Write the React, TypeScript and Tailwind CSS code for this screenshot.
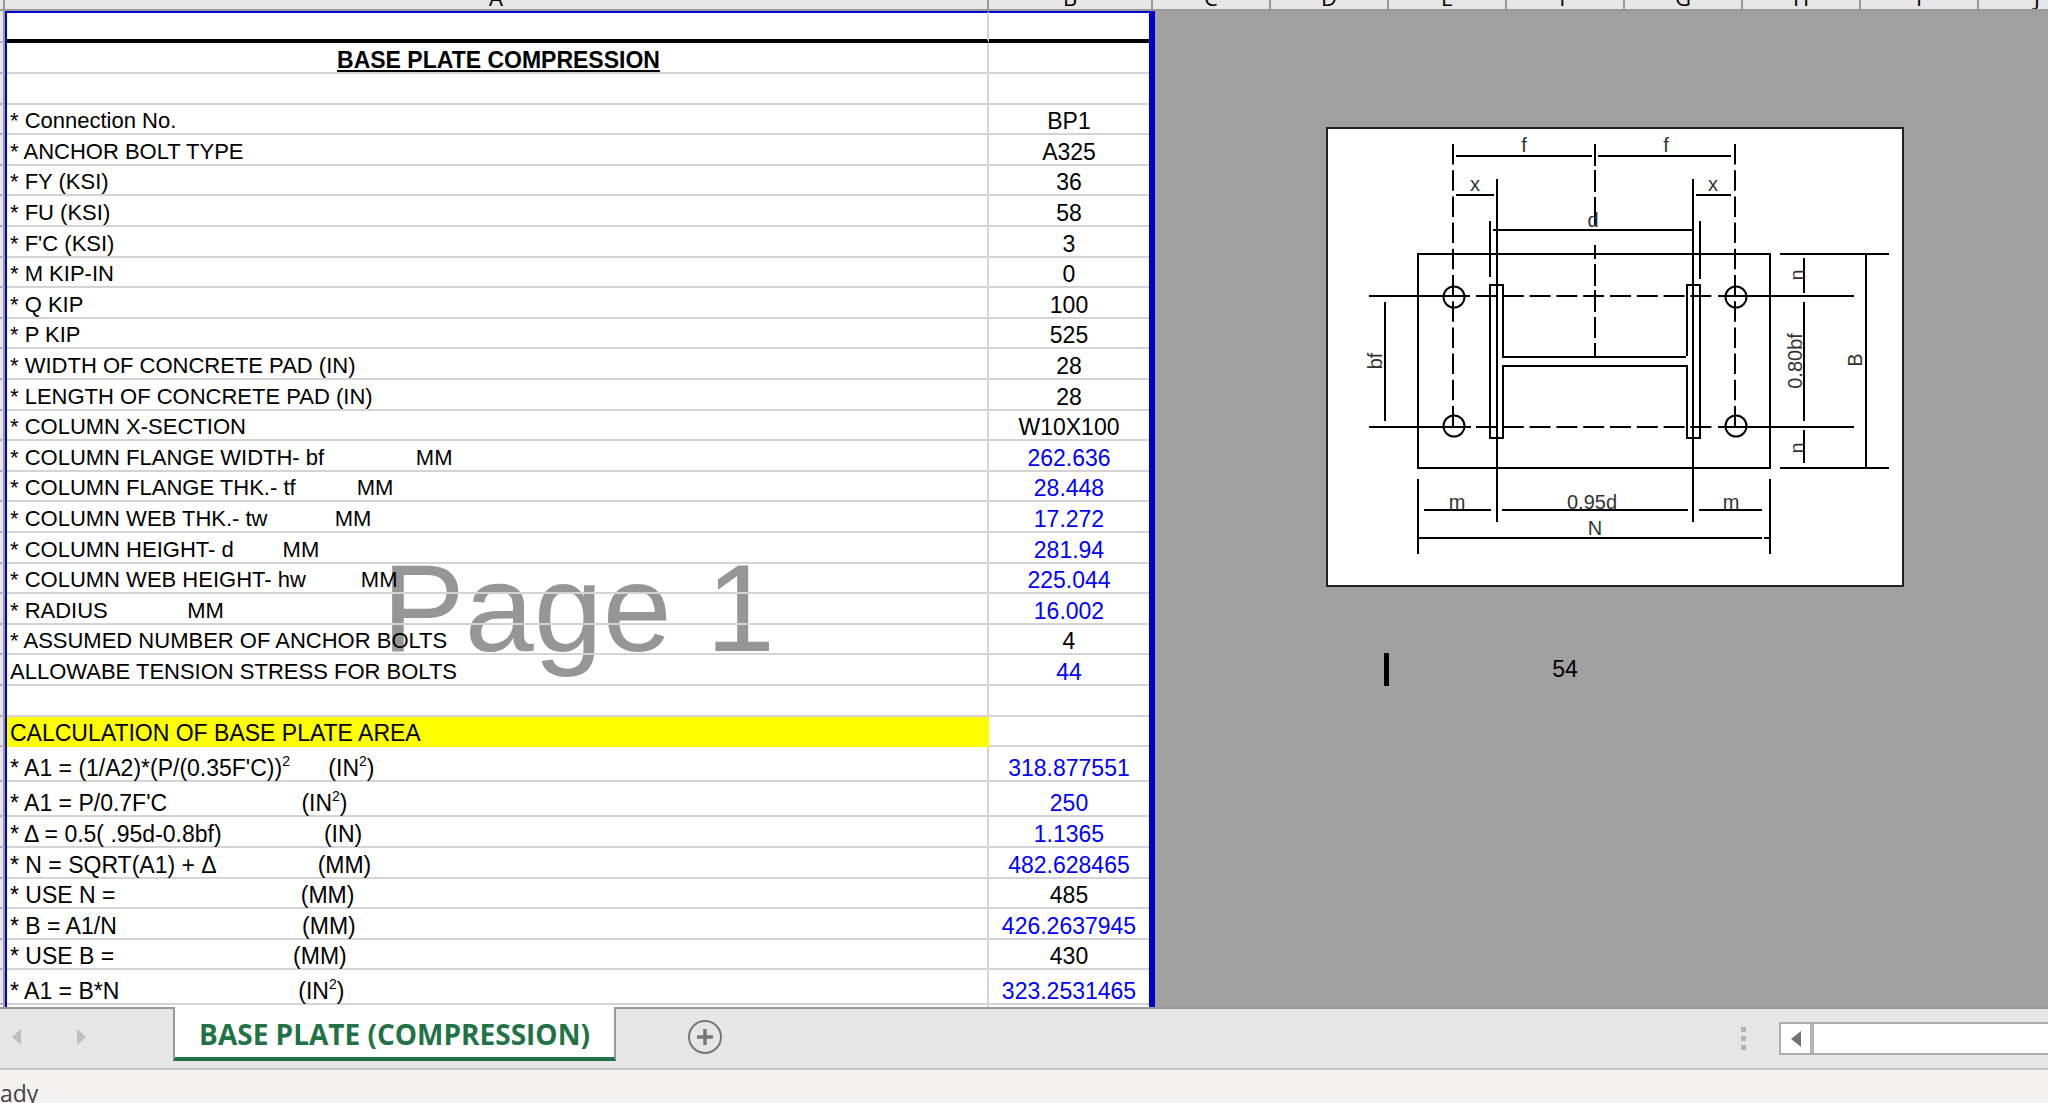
import React from 'react';
import clsx from 'clsx';

type Row = {
  label: React.ReactNode;
  value?: string;
  computed?: boolean;
  tall?: boolean;
  large?: boolean;
};

const Sq = () => <sup className="-top-2.5 text-sm leading-none">2</sup>;

const columns = ['C', 'D', 'E', 'F', 'G', 'H', 'I', 'J'];

const inputRows: Row[] = [
  { label: '* Connection No.', value: 'BP1' },
  { label: '* ANCHOR BOLT TYPE', value: 'A325' },
  { label: '* FY (KSI)', value: '36' },
  { label: '* FU (KSI)', value: '58' },
  { label: "* F'C (KSI)", value: '3' },
  { label: '* M KIP-IN', value: '0' },
  { label: '* Q KIP', value: '100' },
  { label: '* P KIP', value: '525' },
  { label: '* WIDTH OF CONCRETE PAD (IN)', value: '28' },
  { label: '* LENGTH OF CONCRETE PAD (IN)', value: '28' },
  { label: '* COLUMN X-SECTION', value: 'W10X100' },
  { label: '* COLUMN FLANGE WIDTH- bf               MM', value: '262.636', computed: true },
  { label: '* COLUMN FLANGE THK.- tf          MM', value: '28.448', computed: true },
  { label: '* COLUMN WEB THK.- tw           MM', value: '17.272', computed: true },
  { label: '* COLUMN HEIGHT- d        MM', value: '281.94', computed: true },
  { label: '* COLUMN WEB HEIGHT- hw         MM', value: '225.044', computed: true },
  { label: '* RADIUS             MM', value: '16.002', computed: true },
  { label: '* ASSUMED NUMBER OF ANCHOR BOLTS', value: '4' },
  { label: 'ALLOWABE TENSION STRESS FOR BOLTS', value: '44', computed: true },
];

const areaRows: Row[] = [
  { label: <>* A1 = (1/A2)*(P/(0.35F'C))<Sq />{'      '}(IN<Sq />)</>, value: '318.877551', computed: true, tall: true },
  { label: <>* A1 = P/0.7F'C{'                     '}(IN<Sq />)</>, value: '250', computed: true, tall: true },
  { label: '* Δ = 0.5( .95d-0.8bf)                (IN)', value: '1.1365', computed: true },
  { label: '* N = SQRT(A1) + Δ                (MM)', value: '482.628465', computed: true },
  { label: '* USE N =                             (MM)', value: '485' },
  { label: '* B = A1/N                             (MM)', value: '426.2637945', computed: true },
  { label: '* USE B =                            (MM)', value: '430' },
  { label: <>* A1 = B*N{'                            '}(IN<Sq />)</>, value: '323.2531465', computed: true, tall: true },
];

// title, heading and spacer rows plus the data
const rowCount = inputRows.length + areaRows.length + 6;

const rowHeight = 'h-[31px] nth-[5n+1]:h-[30px] nth-[5n+4]:h-[30px]';
const labelCell = 'border-r-2 border-b-2 border-[#d4d4d4] pl-[3px] align-bottom whitespace-pre';
const valueCell = 'border-b-2 border-[#d4d4d4] text-center align-bottom text-[23px]';

const RowHead = () => <td className="border-r-2 border-r-[#999] border-b-2 border-b-[#b5b5b5] bg-[#e6e6e6]" />;

const DataRow = ({ label, value, computed, tall, large }: Row) => (
  <tr className={tall ? 'h-[35px]' : rowHeight}>
    <RowHead />
    <td className={clsx(labelCell, large && 'text-[23px]')}>{label}</td>
    <td className={clsx(valueCell, computed && 'text-[#0000ff]')}>{value}</td>
  </tr>
);

const Sheet = () => (
  <div className="relative w-[1155px] shrink-0 bg-white">
    <div className="absolute left-[382px] top-[525px] text-[124px] leading-[144px] text-[#969696]">Page 1</div>
    <table className="relative w-full table-fixed border-separate border-spacing-0 text-[22px] leading-6 text-black">
      <colgroup>
        <col className="w-[5px]" />
        <col className="w-[2px]" />
        <col />
        <col className="w-[160px]" />
        <col className="w-[6px]" />
      </colgroup>
      <tbody>
        <tr className="h-8">
          <RowHead />
          <td rowSpan={rowCount} className="bg-[#0000d0]" />
          <td className="border-t-2 border-r-2 border-b-4 border-t-[#0000d0] border-r-[#d4d4d4] border-b-black" />
          <td className="border-t-2 border-b-4 border-t-[#0000d0] border-b-black" />
          <td rowSpan={rowCount} className="bg-[#0000d0]" />
        </tr>
        <tr className={rowHeight}>
          <RowHead />
          <th className={clsx(labelCell, 'text-center text-[23px] font-bold underline decoration-2 underline-offset-2')}>
            BASE PLATE COMPRESSION
          </th>
          <td className={valueCell} />
        </tr>
        <DataRow label="" />
        {inputRows.map((row, i) => (
          <DataRow key={i} {...row} />
        ))}
        <DataRow label="" />
        <tr className={rowHeight}>
          <RowHead />
          <td className="border-r-2 border-b-2 border-[#ffff00] bg-[#ffff00] pl-[3px] align-bottom text-[23px]">
            CALCULATION OF BASE PLATE AREA
          </td>
          <td className={valueCell} />
        </tr>
        {areaRows.map((row, i) => (
          <DataRow key={i} {...row} large />
        ))}
        <tr className="h-0.5">
          <td className="border-r-2 border-[#999]" />
          <td className="border-r-2 border-[#d4d4d4]" />
          <td />
        </tr>
      </tbody>
    </table>
  </div>
);

const PlateDrawing = () => (
  <svg viewBox="0 0 576 459" className="ml-[172px] h-[459px] w-[576px] shrink-0 overflow-visible" role="img" aria-label="Base plate plan">
    <rect x="0" y="1" width="576" height="458" fill="#fff" stroke="#222" strokeWidth="2" />
    <g fill="none" stroke="#000" strokeWidth="2">
      {/* plate and column section */}
      <rect x="91" y="127" width="352" height="214" />
      <path d="M176 230V158H163V311H176V239H360V311H373V158H360V229" />
      <path d="M175 230H359" />
      {/* bolt centre lines */}
      <path d="M126 17V300M408 17V300" strokeDasharray="20.5 5.7" />
      <path d="M268 17V39M268 43V65M268 70V99M268 118V132M268 137V159M268 163V185M268 190V211M268 216V230" />
      <path d="M149 169H390M149 300H390" strokeDasharray="21 5.8" />
      <path d="M42 169H143M42 300H144M391 169H527M391 300H527" />
      <circle cx="127" cy="170" r="10.5" />
      <circle cx="409" cy="170" r="10.5" />
      <circle cx="127" cy="299" r="10.5" />
      <circle cx="409" cy="299" r="10.5" />
      {/* top dimensions */}
      <path d="M129 29H265M271 29H404M129 68H167M369 68H404M166 103H366" />
      <path d="M170 52V395M366 52V395M163 94V150M373 94V152" />
      {/* side dimensions */}
      <path d="M58 175V294M453 127H562M453 341H562M539 127V341" />
      <path d="M477 131V166M477 175V294M477 303V336" />
      {/* bottom dimensions */}
      <path d="M97 383H164M175 383H361M372 383H435M91 411H435M437 411H443" />
      <path d="M91 352V427M443 352V427" />
    </g>
    <g fill="#333" fontSize="20" textAnchor="middle">
      <text x="197" y="25">f</text>
      <text x="339" y="25">f</text>
      <text x="148" y="64">x</text>
      <text x="386" y="64">x</text>
      <text x="266" y="100">d</text>
      <text x="130" y="382">m</text>
      <text x="404" y="382">m</text>
      <text x="265" y="382">0.95d</text>
      <text x="268" y="408">N</text>
      <text transform="translate(55 234) rotate(-90)">bf</text>
      <text transform="translate(477 148) rotate(-90)">n</text>
      <text transform="translate(477 321) rotate(-90)">n</text>
      <text transform="translate(475 234) rotate(-90)">0.80bf</text>
      <text transform="translate(535 233) rotate(-90)">B</text>
    </g>
  </svg>
);

const ColumnHeaders = () => (
  <div className="flex h-[11px] items-end overflow-hidden border-b-2 border-[#999] bg-[#e6e6e6] font-['Open_Sans',sans-serif] text-[22px] leading-6 text-black">
    <div className="w-[5px] shrink-0 border-r-2 border-[#999]">&nbsp;</div>
    <div className="w-[984px] shrink-0 border-r-2 border-[#999] text-center">A</div>
    <div className="w-[164px] shrink-0 border-r-2 border-[#999] text-center">B</div>
    {columns.map((name) => (
      <div key={name} className="w-[118px] shrink-0 border-r-2 border-[#999] text-center">{name}</div>
    ))}
  </div>
);

const TabBar = () => (
  <div className="flex h-[63px] shrink-0 border-b-2 border-[#c6c6c6] bg-[#e6e6e6]">
    <div className="flex w-[173px] shrink-0 items-center gap-[54px] border-t-2 border-[#999] pb-1 pl-3">
      <button aria-label="Previous sheet">
        <svg width="10" height="16" viewBox="0 0 10 16"><path d="M9 0V16L0 8Z" fill="#bfbfbf" /></svg>
      </button>
      <button aria-label="Next sheet">
        <svg width="10" height="16" viewBox="0 0 10 16"><path d="M1 0V16L10 8Z" fill="#bfbfbf" /></svg>
      </button>
    </div>
    <button className="mb-[7px] w-[443px] shrink-0 border-x-2 border-b-4 border-x-[#999] border-b-[#217346] bg-white pt-1 font-['Open_Sans',sans-serif] text-[28px] leading-8 font-bold whitespace-nowrap text-[#217346]">
      BASE PLATE (COMPRESSION)
    </button>
    <div className="flex flex-1 items-center border-t-2 border-[#999] pb-1 pl-[71px]">
      <button aria-label="New sheet">
        <svg width="36" height="36" viewBox="0 0 36 36" fill="none" stroke="#777">
          <circle cx="18" cy="18" r="16" strokeWidth="2" />
          <path d="M18 10V26M10 18H26" strokeWidth="3.5" />
        </svg>
      </button>
    </div>
    <div className="flex w-[307px] shrink-0 items-center border-t-2 border-[#999]">
      <div className="flex w-[38px] shrink-0 flex-col gap-1">
        <span className="size-[5px] bg-[#b4b4b4]" />
        <span className="size-[5px] bg-[#b4b4b4]" />
        <span className="size-[5px] bg-[#b4b4b4]" />
      </div>
      <div className="flex h-[33px] flex-1 border-y-2 border-l-2 border-[#adadad] bg-white">
        <button aria-label="Scroll left" className="flex w-[33px] items-center justify-center border-r-4 border-[#b4b4b4]">
          <svg width="10" height="16" viewBox="0 0 10 16"><path d="M10 0V16L0 8Z" fill="#737373" /></svg>
        </button>
      </div>
    </div>
  </div>
);

const App = () => {
  return (
    <div className="flex min-h-screen flex-col overflow-hidden bg-[#f3f2f1] font-['Liberation_Sans',Arial,sans-serif]">
      <ColumnHeaders />
      <main className="flex flex-1 bg-[#a0a0a0]">
        <Sheet />
        <div className="flex flex-1 flex-col overflow-hidden pt-[116px]">
          <PlateDrawing />
          <div className="mt-[67px] flex h-[33px] items-center text-[23px] text-black">
            <span className="ml-[229px] h-full w-[5px] bg-black" />
            <span className="ml-[117px] w-[118px] text-center">54</span>
          </div>
        </div>
      </main>
      <TabBar />
      <footer className="h-[33px] shrink-0 overflow-hidden pt-[7px] font-['Open_Sans',sans-serif] text-[23px] leading-8 text-[#444]">
        ady
      </footer>
    </div>
  );
};

export default App;
